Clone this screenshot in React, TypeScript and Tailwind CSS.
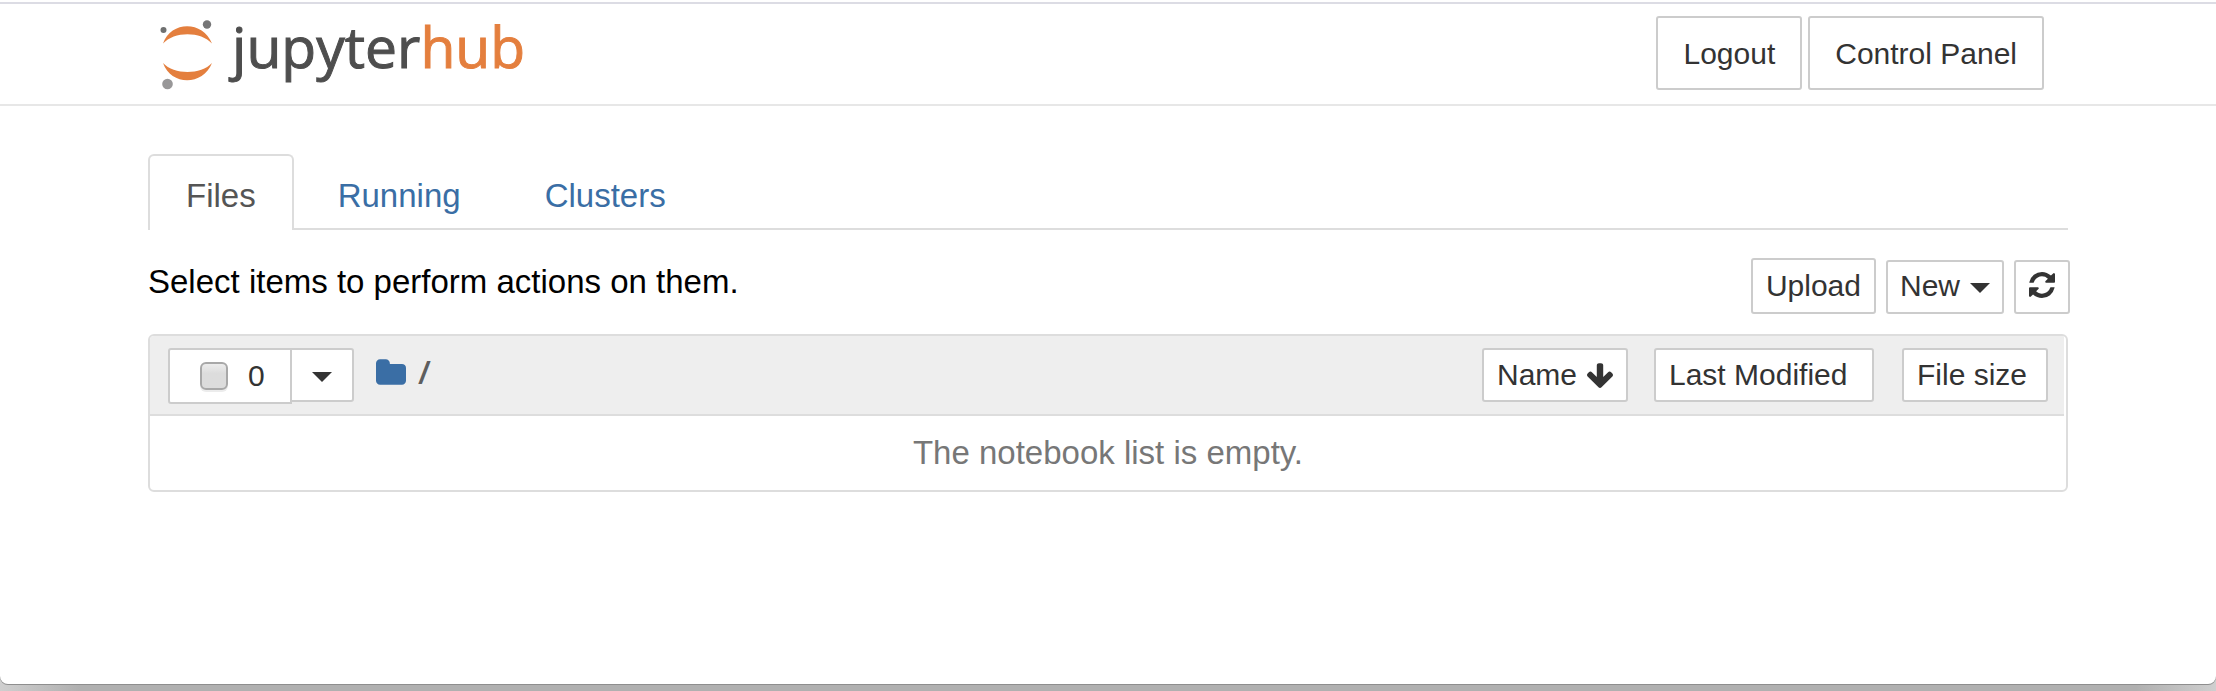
import type { ButtonHTMLAttributes } from "react";

const box = "rounded-[3px] border-2 border-[#ccc] bg-white text-[30px] text-[#333]";

function Caret() {
  return (
    <svg viewBox="0 0 20 10" className="mt-1 h-[10px] w-5 shrink-0" fill="currentColor" aria-hidden="true">
      <path d="M0 0h20L10 10z" />
    </svg>
  );
}

function RefreshIcon() {
  return (
    <svg viewBox="0 128 1536 1536" className="size-[26px]" fill="currentColor" aria-hidden="true">
      <path d="M1511 1056q0 5-1 7-64 268-268 434.5t-478 166.5q-146 0-282.5-55t-243.5-157l-129 129q-19 19-45 19t-45-19-19-45v-448q0-26 19-45t45-19h448q26 0 45 19t19 45-19 45l-137 137q71 66 161 102t187 36q134 0 250-65t186-179q11-17 53-117 8-23 30-23h192q13 0 22.500 9.500t9.500 22.500zM1536 256v448q0 26-19 45t-45 19h-448q-26 0-45-19t-19-45 19-45l138-138q-148-137-349-137-134 0-250 65t-186 179q-11 17-53 117-8 23-30 23h-199q-13 0-22.500-9.500t-9.500-22.500v-7q65-268 270-434.500t480-166.500q146 0 284 55.500t245 156.500l130-129q19-19 45-19t45 19 19 45z" />
    </svg>
  );
}

function ArrowDownIcon() {
  return (
    <svg viewBox="53 64 1558 1547" className="size-[26px] shrink-0" fill="currentColor" aria-hidden="true">
      <path d="M1611 832q0 53-37 90l-651 652q-39 37-91 37-53 0-90-37l-651-652q-38-36-38-90 0-53 38-91l74-75q39-37 91-37 53 0 90 37l294 294v-704q0-52 38-90t90-38h128q52 0 90 38t38 90v704l294-294q37-37 90-37 52 0 91 37l75 75q37 39 37 91z" />
    </svg>
  );
}

function FolderIcon() {
  return (
    <svg viewBox="0 128 1664 1408" className="h-[26px] w-[30px]" fill="currentColor" aria-hidden="true">
      <path d="M1664 608v704q0 92-66 158t-158 66h-1216q-92 0-158-66t-66-158v-960q0-92 66-158t158-66h320q92 0 158 66t66 158v32h672q92 0 158 66t66 158z" />
    </svg>
  );
}

function Logo() {
  return (
    <a href="#" className="flex h-[74px] items-start" aria-label="jupyterhub">
      <svg viewBox="0 0 52 70" className="mt-1 h-[70px] w-[52px]" aria-hidden="true">
        <path d="M3 23.500C11 .5 43 .5 52 23.500C41 11 14 11 3 23.500z" fill="#e47f3e" />
        <path d="M3 43C11 66 43 66 52 43C41 55 14 55 3 43z" fill="#e47f3e" />
        <circle cx="3.500" cy="10" r="3" fill="#6f7070" />
        <circle cx="47" cy="4.500" r="4.200" fill="#767677" />
        <circle cx="7.500" cy="64" r="5.300" fill="#989798" />
      </svg>
      <span className="ml-5 font-['Open_Sans',sans-serif] text-[57px] leading-[60px] text-[#4e4e4e] [-webkit-text-stroke:1px]">
        jupyter<span className="text-[#e47f3e]">hub</span>
      </span>
    </a>
  );
}

function HeaderButton(props: ButtonHTMLAttributes<HTMLButtonElement>) {
  return <button type="button" className={`${box} h-[74px] px-[25px] pt-0.5`} {...props} />;
}

function SortButton(props: ButtonHTMLAttributes<HTMLButtonElement>) {
  return <button type="button" className={`${box} flex h-[54px] items-center gap-2.5 px-[13px]`} {...props} />;
}

export default function App() {
  return (
    <div className="flex min-h-screen flex-col bg-[linear-gradient(to_right,#cfcfcf,#b0b0b0_80px,#b0b0b0_calc(100%-80px),#cfcfcf)] pb-[7px] font-['Liberation_Sans',Arial,sans-serif] text-[33px] leading-10">
      <div className="flex-1 rounded-b-lg bg-white pt-0.5 shadow-[0_1px_0_#8e8e8e]">
        <header className="border-y-2 border-t-[#dcdce4] border-b-[#e7e7e7]">
          <div className="mx-auto flex max-w-[1920px] justify-between px-3 pt-3 pb-3.5">
            <Logo />
            <div className="mr-3 flex gap-1.5">
              <HeaderButton>Logout</HeaderButton>
              <HeaderButton>Control Panel</HeaderButton>
            </div>
          </div>
        </header>

        <main className="mx-auto max-w-[1920px] pt-12">
          <nav className="flex border-b-2 border-[#ddd]">
            <a href="#files" aria-current="page" className="-mb-0.5 rounded-t-md border-2 border-b-0 border-[#ddd] bg-white px-9 pt-5 pb-3.5 text-[#555]">
              Files
            </a>
            <a href="#running" className="ml-1 px-10 pt-[22px] pb-3 text-[#3a6ea5]">
              Running
            </a>
            <a href="#clusters" className="ml-1 px-10 pt-[22px] pb-3 text-[#3a6ea5]">
              Clusters
            </a>
          </nav>

          <div className="mb-5 flex items-end justify-between pt-7">
            <p className="self-start pt-1 text-black">Select items to perform actions on them.</p>
            <div className="-mr-0.5 flex items-end gap-2.5">
              <button type="button" className={`${box} h-14 px-[13px]`}>
                Upload
              </button>
              <button type="button" className={`${box} flex h-[54px] items-center gap-2.5 px-3 pb-0.5`}>
                New
                <Caret />
              </button>
              <button type="button" aria-label="Refresh" className={`${box} flex h-[54px] items-center px-[13px] pb-1`}>
                <RefreshIcon />
              </button>
            </div>
          </div>

          <section className="rounded-md border-2 border-[#ddd]">
            <div className="mr-0.5 flex justify-between rounded-tl border-b-2 border-[#ddd] bg-[#eee] py-3 pr-4 pl-[18px]">
              <div className="-mb-0.5 flex items-start">
                <label className="flex h-14 w-[124px] items-center rounded-l-[3px] border-2 border-[#ccc] bg-white pl-[30px] text-[30px] text-[#333]">
                  <input
                    type="checkbox"
                    className="size-7 appearance-none rounded-md border-2 border-[#a8a8a8] bg-linear-to-b from-[#ececec] to-[#dcdcdc] to-40% shadow-[0_2px_0_#ececec]"
                  />
                  <span className="ml-5">0</span>
                </label>
                <button
                  type="button"
                  aria-label="Selection menu"
                  className="-ml-0.5 flex h-[54px] w-16 items-center justify-center rounded-r-[3px] border-2 border-[#ccc] bg-white text-[#333]"
                >
                  <Caret />
                </button>
                <div className="ml-[22px] flex h-12 items-center gap-3">
                  <a href="#root" aria-label="Root folder" className="text-[#3a6ea5]">
                    <FolderIcon />
                  </a>
                  <span className="font-['Open_Sans',sans-serif] font-semibold text-[#5e5e5e]">/</span>
                </div>
              </div>
              <div className="flex">
                <SortButton>
                  Name
                  <ArrowDownIcon />
                </SortButton>
                <div className="ml-[26px] flex w-[220px] flex-col">
                  <SortButton>Last Modified</SortButton>
                </div>
                <div className="ml-7 flex w-[146px] flex-col">
                  <SortButton>File size</SortButton>
                </div>
              </div>
            </div>
            <p className="py-[17px] text-center text-[#777]">The notebook list is empty.</p>
          </section>
        </main>
      </div>
    </div>
  );
}
